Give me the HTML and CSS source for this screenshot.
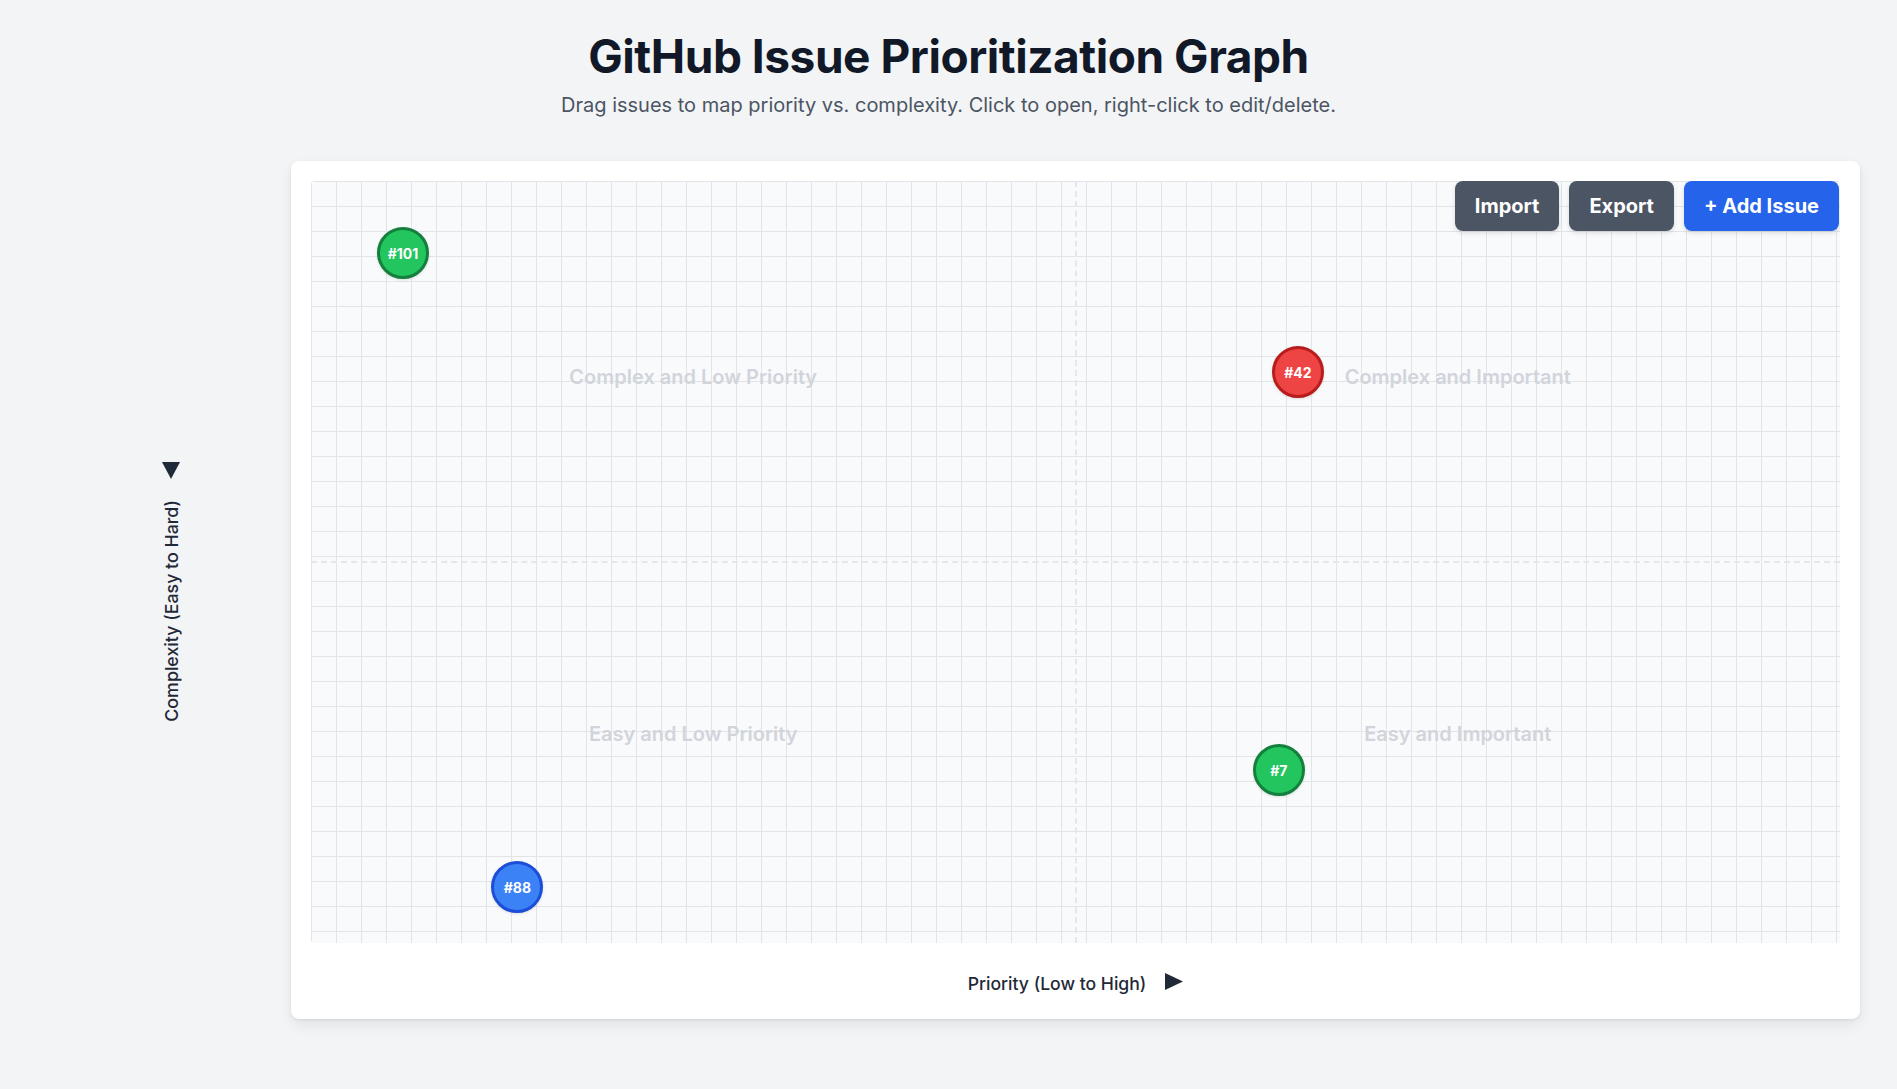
FILE: index.html
```html
<!DOCTYPE html>
<html lang="en">
<head>
<meta charset="utf-8">
<title>GitHub Issue Prioritization Graph</title>
<link rel="stylesheet" href="styles.css">
</head>
<body>
  <header class="header">
    <h1 class="title">GitHub Issue Prioritization Graph</h1>
    <p class="subtitle">Drag issues to map priority vs. complexity. Click to open, right-click to edit/delete.</p>
  </header>

  <main class="layout">
    <div class="y-axis">
      <svg class="arrow-down" width="18" height="17" viewBox="0 0 18 17"><polygon points="0,0 18,0 9,17" fill="#1f2937"/></svg>
      <span class="y-label">Complexity (Easy to Hard)</span>
    </div>

    <section class="card">
      <div class="board">
        <div class="divider-v"></div>
        <div class="divider-h"></div>

        <span class="quad-label q-tl">Complex and Low Priority</span>
        <span class="quad-label q-tr">Complex and Important</span>
        <span class="quad-label q-bl">Easy and Low Priority</span>
        <span class="quad-label q-br">Easy and Important</span>

        <div class="toolbar">
          <button class="btn btn-gray">Import</button>
          <button class="btn btn-gray">Export</button>
          <button class="btn btn-blue">+ Add Issue</button>
        </div>

        <div class="issue issue-green" style="left:6.02%;top:9.45%">#101</div>
        <div class="issue issue-red" style="left:64.55%;top:25.07%">#42</div>
        <div class="issue issue-blue" style="left:13.5%;top:92.65%">#88</div>
        <div class="issue issue-green" style="left:63.3%;top:77.3%">#7</div>
      </div>

      <div class="x-axis">
        <span class="x-label">Priority (Low to High)</span>
        <svg class="arrow-right" width="18" height="17" viewBox="0 0 18 17"><polygon points="0,0 18,8.5 0,17" fill="#1f2937"/></svg>
      </div>
    </section>
  </main>
</body>
</html>
```

FILE: styles.css
```css
* {
  box-sizing: border-box;
}

html, body {
  margin: 0;
  padding: 0;
}

body {
  background: #f3f4f6;
  font-family: Inter, "Noto Sans", "Liberation Sans", sans-serif;
  color: #111827;
  min-height: 100vh;
}

.header {
  text-align: center;
  padding-top: 27px;
}

.title {
  margin: 0;
  font-size: 46px;
  line-height: 58px;
  font-weight: 700;
  color: #111827;
  letter-spacing: -0.01em;
}

.subtitle {
  margin: 8px 0 0;
  font-size: 20px;
  line-height: 24px;
  color: #4b5563;
}

.layout {
  display: flex;
  align-items: center;
  gap: 100px;
  padding: 0 37px 0 151px;
  margin-top: 44px;
}

.y-axis {
  width: 40px;
  flex: none;
  display: flex;
  flex-direction: column;
  align-items: center;
  gap: 21px;
}

.arrow-down {
  margin-top: 4px;
}

.y-label {
  writing-mode: vertical-rl;
  transform: rotate(180deg);
  font-size: 17.8px;
  font-weight: 500;
  color: #1f2937;
  white-space: nowrap;
}

.card {
  flex: 1;
  background: #ffffff;
  border-radius: 8px;
  padding: 20px 20px 24px;
  box-shadow: 0 1px 3px rgba(0, 0, 0, 0.08), 0 6px 14px rgba(0, 0, 0, 0.07);
}

.board {
  position: relative;
  height: 70vh;
  border-radius: 4px;
  overflow: hidden;
  background-color: #f9fafb;
  background-image:
    linear-gradient(to right, #e2e4e8 1px, transparent 1px),
    linear-gradient(to bottom, #e2e4e8 1px, transparent 1px);
  background-size: 25px 25px;
}

.divider-v {
  position: absolute;
  top: 0;
  bottom: 0;
  left: 50%;
  margin-left: -1px;
  border-left: 2px dashed #e5e7eb;
}

.divider-h {
  position: absolute;
  left: 0;
  right: 0;
  top: 50%;
  margin-top: -1px;
  border-top: 2px dashed #e5e7eb;
}

.quad-label {
  position: absolute;
  transform: translate(-50%, -50%);
  font-size: 20px;
  font-weight: 600;
  color: #d1d5db;
  white-space: nowrap;
  pointer-events: none;
}

.q-tl { left: 25%; top: 25.75%; }
.q-tr { left: 75%; top: 25.75%; }
.q-bl { left: 25%; top: 72.55%; }
.q-br { left: 75%; top: 72.55%; }

.toolbar {
  position: absolute;
  top: 0;
  right: 1px;
  display: flex;
  gap: 10px;
}

.btn {
  height: 50px;
  padding: 0 20px;
  border: none;
  border-radius: 8px;
  font-family: Inter, "Noto Sans", "Liberation Sans", sans-serif;
  font-size: 20px;
  font-weight: 700;
  color: #ffffff;
  box-shadow: 0 2px 5px rgba(0, 0, 0, 0.12);
  cursor: pointer;
}

.btn-gray {
  background: #4b5563;
}

.btn-blue {
  background: #2563eb;
}

.issue {
  position: absolute;
  width: 52px;
  height: 52px;
  margin: -26px 0 0 -26px;
  border-radius: 50%;
  border: 3px solid;
  display: flex;
  align-items: center;
  justify-content: center;
  font-size: 14px;
  font-weight: 700;
  color: #ffffff;
  box-shadow: 0 1px 3px rgba(0, 0, 0, 0.12);
}

.issue-green {
  background: #22c55e;
  border-color: #15803d;
}

.issue-red {
  background: #ef4444;
  border-color: #b91c1c;
}

.issue-blue {
  background: #3b82f6;
  border-color: #1d4ed8;
}

.x-axis {
  margin-top: 28px;
  height: 24px;
  display: flex;
  align-items: center;
  justify-content: center;
  gap: 19px;
}

.x-label {
  font-size: 17.6px;
  font-weight: 500;
  color: #1f2937;
}

.arrow-right {
  margin-top: -3px;
}
```
